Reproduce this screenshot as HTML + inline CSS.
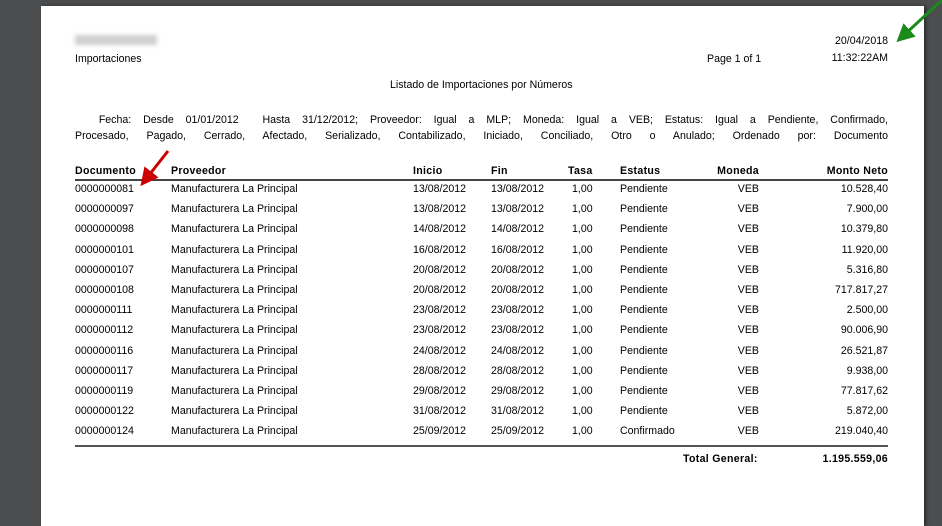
<!DOCTYPE html>
<html><head><style>
body{margin:0;width:942px;height:507px;background:#4b4d4f;position:relative;overflow:hidden;font-family:"Liberation Sans",sans-serif;font-size:10.6px;color:#000}
.page{position:absolute;left:41px;top:6px;width:883px;height:520px;background:#fff;box-shadow:2px 0 3px #2a2a2a}
.t{position:absolute;white-space:nowrap;line-height:12px}
.r{text-align:right}
b{font-weight:bold;letter-spacing:0.3px}
.filt{position:absolute;left:75px;top:112px;width:813px;text-align:justify;text-align-last:justify;line-height:16px;word-spacing:2px}
</style></head><body>
<div class="page"></div>
<div style="position:absolute;left:75px;top:35px;width:82px;height:10px;background:#cfcfcf;filter:blur(2px)"></div>
<div class="t" style="left:75px;top:53px">Importaciones</div>
<div class="t" style="left:707px;top:53px">Page 1 of 1</div>
<div class="t r" style="left:780px;width:108px;top:35px">20/04/2018</div>
<div class="t r" style="left:780px;width:108px;top:52px">11:32:22AM</div>
<div class="t" style="left:390px;top:79px">Listado de Importaciones por Números</div>
<div class="filt">&nbsp;&nbsp;Fecha: Desde 01/01/2012 &nbsp;Hasta 31/12/2012; Proveedor: Igual a MLP; Moneda: Igual a VEB; Estatus: Igual a Pendiente, Confirmado,<br>Procesado, Pagado, Cerrado, Afectado, Serializado, Contabilizado, Iniciado, Conciliado, Otro o Anulado; Ordenado por: Documento</div>
<div class="t" style="left:75px;top:165px"><b>Documento</b></div>
<div class="t" style="left:171px;top:165px"><b>Proveedor</b></div>
<div class="t" style="left:413px;top:165px"><b>Inicio</b></div>
<div class="t" style="left:491px;top:165px"><b>Fin</b></div>
<div class="t" style="left:568px;top:165px"><b>Tasa</b></div>
<div class="t" style="left:620px;top:165px"><b>Estatus</b></div>
<div class="t r" style="left:680px;width:79px;top:165px"><b>Moneda</b></div>
<div class="t r" style="left:780px;width:108px;top:165px"><b>Monto Neto</b></div>
<div style="position:absolute;left:75px;top:179px;width:813px;height:2px;background:#444"></div>
<div id="rows"></div>
<div style="position:absolute;left:75px;top:445px;width:813px;height:2px;background:#555"></div>
<div class="t" style="left:683px;top:453px"><b>Total General:</b></div>
<div class="t r" style="left:780px;width:108px;top:453px"><b>1.195.559,06</b></div>
<svg width="942" height="507" style="position:absolute;left:0;top:0">
<defs><marker id="a" markerWidth="6" markerHeight="6" refX="3" refY="3" orient="auto"><path d="M0,0 L6,3 L0,6 z" fill="#c00"/></marker>
<marker id="g" markerWidth="6" markerHeight="6" refX="3" refY="3" orient="auto"><path d="M0,0 L6,3 L0,6 z" fill="#1a8a1a"/></marker></defs>
<line x1="168" y1="151" x2="146" y2="179" stroke="#c00" stroke-width="3" marker-end="url(#a)"/>
<line x1="942" y1="0" x2="903" y2="36" stroke="#1a8a1a" stroke-width="3" marker-end="url(#g)"/>
</svg>
<script>
var d=[["0000000081","13/08/2012","13/08/2012","Pendiente","10.528,40"],["0000000097","13/08/2012","13/08/2012","Pendiente","7.900,00"],["0000000098","14/08/2012","14/08/2012","Pendiente","10.379,80"],["0000000101","16/08/2012","16/08/2012","Pendiente","11.920,00"],["0000000107","20/08/2012","20/08/2012","Pendiente","5.316,80"],["0000000108","20/08/2012","20/08/2012","Pendiente","717.817,27"],["0000000111","23/08/2012","23/08/2012","Pendiente","2.500,00"],["0000000112","23/08/2012","23/08/2012","Pendiente","90.006,90"],["0000000116","24/08/2012","24/08/2012","Pendiente","26.521,87"],["0000000117","28/08/2012","28/08/2012","Pendiente","9.938,00"],["0000000119","29/08/2012","29/08/2012","Pendiente","77.817,62"],["0000000122","31/08/2012","31/08/2012","Pendiente","5.872,00"],["0000000124","25/09/2012","25/09/2012","Confirmado","219.040,40"]];
var h="";d.forEach(function(r,i){var y=183+i*20.2;
h+='<div class="t" style="left:75px;top:'+y+'px">'+r[0]+'</div><div class="t" style="left:171px;top:'+y+'px">Manufacturera La Principal</div><div class="t" style="left:413px;top:'+y+'px">'+r[1]+'</div><div class="t" style="left:491px;top:'+y+'px">'+r[2]+'</div><div class="t" style="left:572px;top:'+y+'px">1,00</div><div class="t" style="left:620px;top:'+y+'px">'+r[3]+'</div><div class="t r" style="left:680px;width:79px;top:'+y+'px">VEB</div><div class="t r" style="left:780px;width:108px;top:'+y+'px">'+r[4]+'</div>';});
document.getElementById("rows").innerHTML=h;
</script>
</body></html>
